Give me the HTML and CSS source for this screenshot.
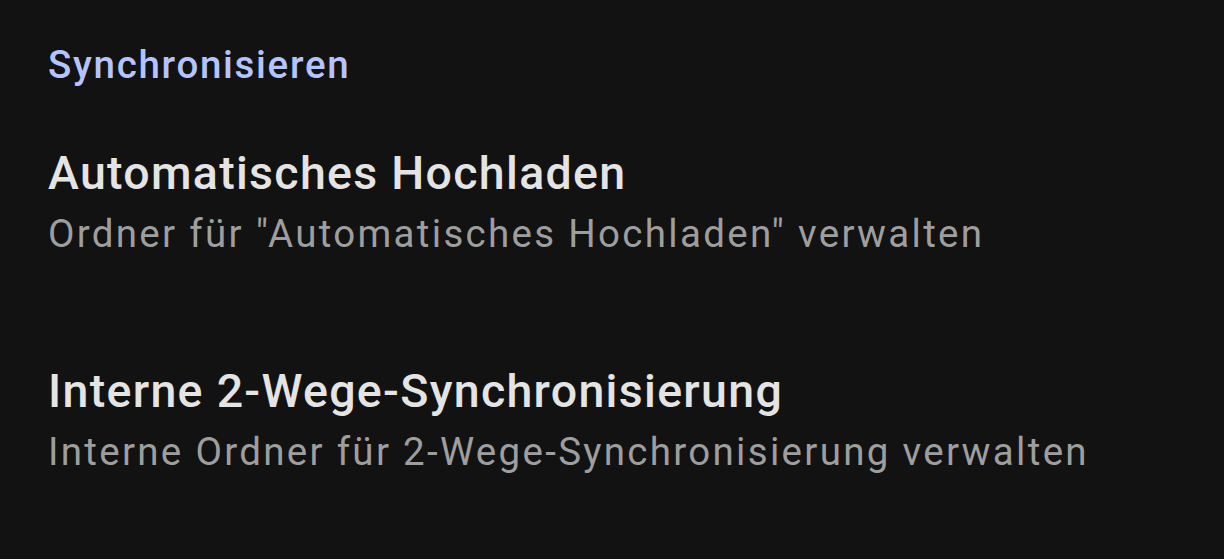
FILE: index.html
```html
<!DOCTYPE html>
<html lang="de">
<head>
<meta charset="utf-8">
<link rel="stylesheet" href="styles.css">
</head>
<body>
<div class="screen">
  <div class="category">Synchronisieren</div>
  <div class="pref">
    <div class="pref-title">Automatisches Hochladen</div>
    <div class="pref-summary">Ordner für "Automatisches Hochladen" verwalten</div>
  </div>
  <div class="pref">
    <div class="pref-title">Interne 2-Wege-Synchronisierung</div>
    <div class="pref-summary">Interne Ordner für 2-Wege-Synchronisierung verwalten</div>
  </div>
</div>
</body>
</html>
```
FILE: styles.css
```css
html, body {
  margin: 0;
  padding: 0;
  background: #121212;
}
.screen {
  width: 1224px;
  height: 559px;
  overflow: hidden;
  font-family: Roboto, "Noto Sans", sans-serif;
  padding: 0 48px;
  box-sizing: border-box;
  white-space: nowrap;
}
.category {
  color: #b5c4ff;
  font-size: 38.5px;
  font-weight: 500;
  letter-spacing: 1.7px;
  line-height: 46px;
  padding-top: 42px;
  padding-bottom: 7px;
}
.pref {
  padding: 48px 0;
}
.pref-title {
  color: #e4e4e4;
  font-size: 46.5px;
  font-weight: 500;
  letter-spacing: 1.3px;
  line-height: 60px;
}
.pref-summary {
  color: #9e9e9e;
  font-size: 38.5px;
  letter-spacing: 2.3px;
  line-height: 62px;
}
```
